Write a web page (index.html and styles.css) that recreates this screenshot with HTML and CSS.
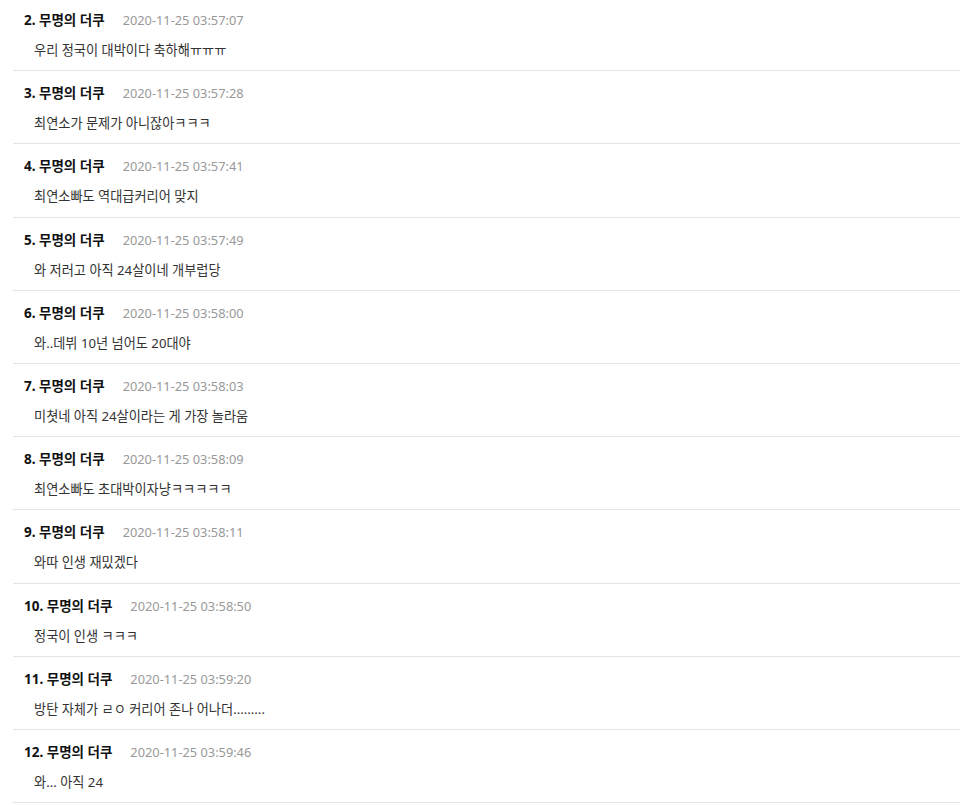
FILE: index.html
```html
<!DOCTYPE html>
<html lang="ko">
<head>
<meta charset="utf-8">
<link rel="stylesheet" href="styles.css">
</head>
<body>
<ul class="comments">
  <li class="comment"><div class="head"><span class="name">2. 무명의 더쿠</span><span class="date">2020-11-25 03:57:07</span></div><div class="body">우리 정국이 대박이다 축하해ㅠㅠㅠ</div></li>
  <li class="comment"><div class="head"><span class="name">3. 무명의 더쿠</span><span class="date">2020-11-25 03:57:28</span></div><div class="body">최연소가 문제가 아니잖아ㅋㅋㅋ</div></li>
  <li class="comment"><div class="head"><span class="name">4. 무명의 더쿠</span><span class="date">2020-11-25 03:57:41</span></div><div class="body">최연소빠도 역대급커리어 맞지</div></li>
  <li class="comment"><div class="head"><span class="name">5. 무명의 더쿠</span><span class="date">2020-11-25 03:57:49</span></div><div class="body">와 저러고 아직 24살이네 개부럽당</div></li>
  <li class="comment"><div class="head"><span class="name">6. 무명의 더쿠</span><span class="date">2020-11-25 03:58:00</span></div><div class="body">와..데뷔 10년 넘어도 20대야</div></li>
  <li class="comment"><div class="head"><span class="name">7. 무명의 더쿠</span><span class="date">2020-11-25 03:58:03</span></div><div class="body">미쳣네 아직 24살이라는 게 가장 놀라움</div></li>
  <li class="comment"><div class="head"><span class="name">8. 무명의 더쿠</span><span class="date">2020-11-25 03:58:09</span></div><div class="body">최연소빠도 초대박이자냥ㅋㅋㅋㅋㅋ</div></li>
  <li class="comment"><div class="head"><span class="name">9. 무명의 더쿠</span><span class="date">2020-11-25 03:58:11</span></div><div class="body">와따 인생 재밌겠다</div></li>
  <li class="comment"><div class="head"><span class="name">10. 무명의 더쿠</span><span class="date">2020-11-25 03:58:50</span></div><div class="body">정국이 인생 ㅋㅋㅋ</div></li>
  <li class="comment"><div class="head"><span class="name">11. 무명의 더쿠</span><span class="date">2020-11-25 03:59:20</span></div><div class="body">방탄 자체가 ㄹㅇ 커리어 존나 어나더.........</div></li>
  <li class="comment"><div class="head"><span class="name">12. 무명의 더쿠</span><span class="date">2020-11-25 03:59:46</span></div><div class="body">와... 아직 24</div></li>
</ul>
</body>
</html>
```
FILE: styles.css
```css
html, body {
  margin: 0;
  padding: 0;
  background: #fff;
}
body {
  font-family: "Noto Sans", "Noto Sans CJK KR", sans-serif;
  color: #222;
}
.comments {
  list-style: none;
  margin: -2px 0 0 13px;
  padding: 0;
}
.comment {
  padding: 13px 0 11.2px 11px;
  border-bottom: 1px solid #e5e5e5;
}
.head {
  display: flex;
  align-items: center;
  gap: 18px;
  height: 18px;
  line-height: 18px;
}
.name {
  font-size: 13.5px;
  font-weight: bold;
  color: #111;
}
.date {
  font-size: 12.8px;
  color: #999;
}
.body {
  margin-top: 12px;
  padding-left: 10px;
  height: 18px;
  line-height: 18px;
  font-size: 13.2px;
  color: #333;
}
```
